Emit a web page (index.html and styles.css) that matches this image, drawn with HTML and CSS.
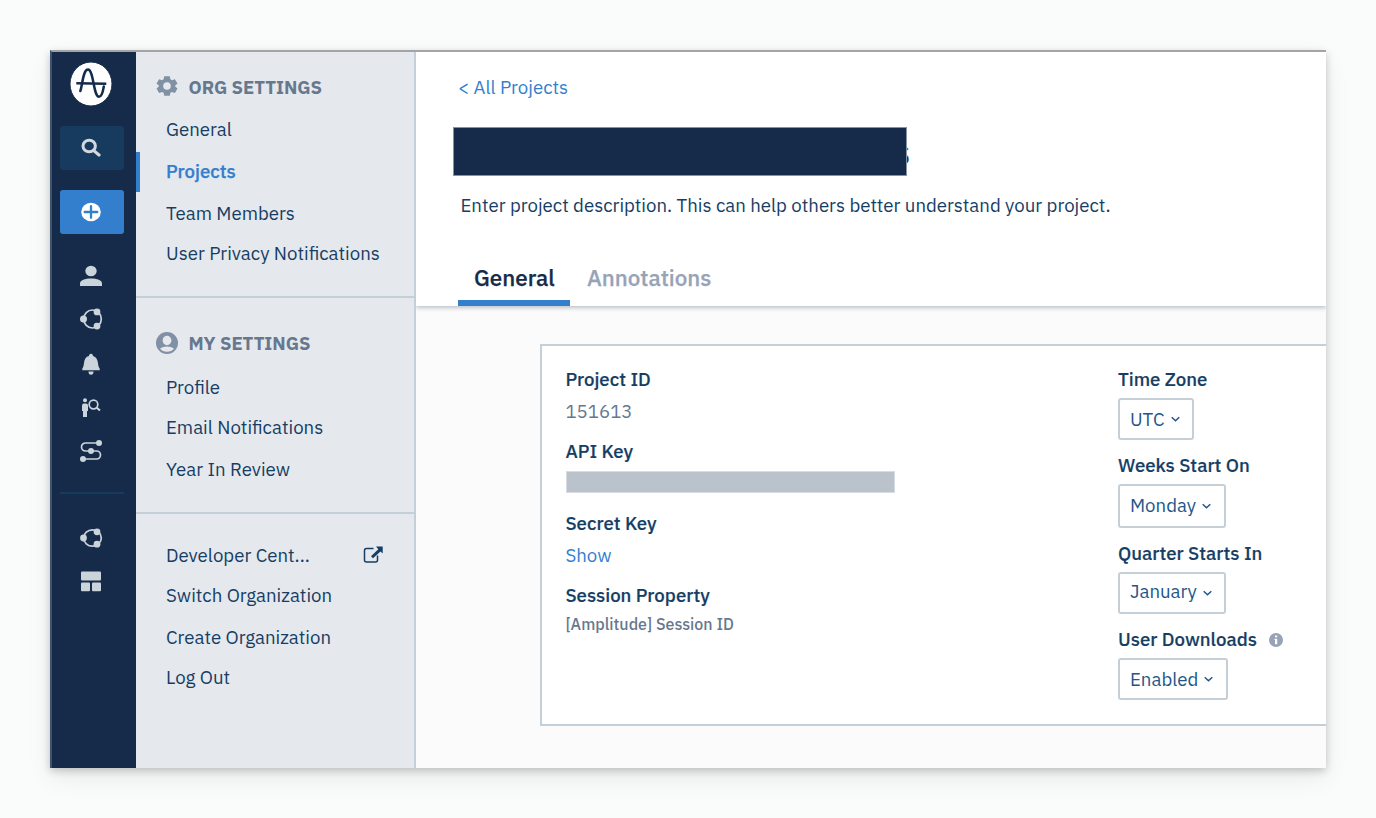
FILE: index.html
```html
<!DOCTYPE html>
<html lang="en">
<head>
<meta charset="utf-8">
<title>Project Settings</title>
<link rel="stylesheet" href="styles.css">
</head>
<body>
<div class="window">
  <nav class="rail">
    <svg class="logo" viewBox="0 0 42 44"><ellipse cx="21" cy="22" rx="21" ry="22" fill="#fff"/><path d="M6.300 21.300L36.300 21.700" stroke-width="2.600"/><path d="M10.300 29C12.300 24 13 7.600 18 7.600C23.800 7.600 23.300 34.800 29 34.800C31.500 34.800 33 29.500 33.800 24.500" stroke-width="2.500" stroke-linecap="round"/></svg>
    <div class="rail-button search"><svg width="20" height="20" viewBox="0 0 20 20"><ellipse cx="8.200" cy="8" rx="6.200" ry="5.800" fill="none" stroke="#d1d8df" stroke-width="3"/><path d="M12.800 12.600L18 17" stroke="#d1d8df" stroke-width="3.200" stroke-linecap="round"/></svg></div>
    <div class="rail-button add"><svg width="20" height="20" viewBox="0 0 20 20"><ellipse cx="10" cy="10" rx="9.800" ry="9.200" fill="#fff"/><path d="M10 4.200V15.800M3.700 10H16.300" stroke="#337fce" stroke-width="2.300" stroke-linecap="round"/></svg></div>
    <div class="rail-icons">
      <svg viewBox="0 0 24 24"><ellipse cx="12" cy="7" rx="5.700" ry="5.200"/><path d="M1 22v-2.500C1 16 6 14.500 12 14.500S23 16 23 19.500V22z"/></svg>
      <svg viewBox="0 1 24 24"><ellipse cx="13.500" cy="12" rx="8.800" ry="9" class="line"/><circle cx="4.500" cy="12" r="3.500"/><circle cx="18" cy="4.900" r="3.400"/><circle cx="18" cy="19.100" r="3.400"/></svg>
      <svg viewBox="0 -1 24 24"><path d="M12 .8c1.300 0 2 1 2 2.200c3.200.8 4.500 3.300 5 7.300c.4 3.500 1 4.200 1.700 5.200v1.800H3.300v-1.800C4 14.500 4.600 13.500 5 10c.5-4 1.800-6.200 5-7C10 1.800 10.700.8 12 .8zM9.500 18.500h5a2.500 3.200 0 0 1-5 0z"/></svg>
      <svg viewBox="0 0 24 24"><circle cx="6" cy="4.200" r="2"/><path d="M3 9.500Q3 7.500 5 7.500h2Q9 7.500 9 9.500V15H8v6H4V15H3z"/><circle cx="14.500" cy="8.500" r="4.300" class="line"/><path d="M17.500 11.500L21 14.500" class="line thick"/></svg>
      <svg viewBox="0 1 24 24"><path d="M19 4H6.500a4 4 0 0 0 0 8h11a4 4 0 0 1 0 8H4" class="line"/><circle cx="20" cy="4" r="3"/><circle cx="12" cy="12" r="3"/><circle cx="4" cy="20" r="3"/></svg>
    </div>
    <div class="rail-line"></div>
    <div class="rail-icons">
      <svg viewBox="0 0 24 24"><ellipse cx="13.500" cy="12" rx="8.800" ry="8.200" class="line"/><circle cx="4.500" cy="12" r="3.400"/><circle cx="18" cy="5.800" r="3.400"/><circle cx="18" cy="18.200" r="3.400"/></svg>
      <svg viewBox="0 1 24 24"><rect x="2" y="2.500" width="20" height="9" rx="1"/><rect x="2" y="13.500" width="9" height="8.800" rx="1"/><rect x="13" y="13.500" width="9" height="8.800" rx="1"/></svg>
    </div>
  </nav>
  <aside class="sidebar">
    <section class="group org">
      <h2><svg viewBox="0 0 22 22"><path fill-rule="evenodd" d="M8.200 1.300h5.600l.6 3l1.500.9l3-1l2.600 4.300l-2.300 2v1.100l2.300 2l-2.600 4.300l-3-1l-1.500.9l-.6 3H8.200l-.6-3l-1.500-.9l-3 1L.5 13.600l2.300-2v-1.100l-2.300-2l2.600-4.300l3 1l1.500-.9zM11 7.200a3.800 3.800 0 1 0 0 7.600a3.800 3.800 0 1 0 0-7.600z"/></svg><span>ORG SETTINGS</span></h2>
      <ul>
        <li>General</li>
        <li class="active">Projects</li>
        <li class="spaced">Team Members</li>
        <li>User Privacy Notifications</li>
      </ul>
    </section>
    <section class="group mine">
      <h2><svg viewBox="0 0 22 22"><circle cx="11" cy="11" r="11"/><ellipse cx="11" cy="8.500" rx="4.400" ry="4.700" fill="#e5e8ed"/><path d="M4 16.500q3-2 7-2t7 2q-2.500 3.300-7 3.300t-7-3.300z" fill="#e5e8ed"/></svg><span>MY SETTINGS</span></h2>
      <ul>
        <li>Profile</li>
        <li>Email Notifications</li>
        <li class="spaced">Year In Review</li>
      </ul>
    </section>
    <section class="group links">
      <ul>
        <li>Developer Cent...<svg class="external" width="20" height="18" viewBox="0 0 20 18"><path d="M10.500 2.500H3.500Q1.500 2.500 1.500 4.500V14Q1.500 16 3.500 16H12.500Q14.500 16 14.500 14V9.500" fill="none" stroke="#163e64" stroke-width="1.500"/><path d="M13 .5H19.700V7.500L17.500 5.400L10 12.200L8 10.300L15.300 3.200z" fill="#163e64"/></svg></li>
        <li>Switch Organization</li>
        <li class="spaced">Create Organization</li>
        <li>Log Out</li>
      </ul>
    </section>
  </aside>
  <main class="main">
    <header class="head">
      <a class="back">&lt; All Projects</a>
      <div class="title"><span class="mask"></span><span class="tail">s</span></div>
      <p class="desc">Enter project description. This can help others better understand your project.</p>
      <div class="tabs"><div class="tab selected">General</div><div class="tab">Annotations</div></div>
    </header>
    <div class="card">
      <dl class="keys">
        <dt>Project ID</dt><dd>151613</dd>
        <dt>API Key</dt><dd class="masked"><span class="key-mask"></span></dd>
        <dt>Secret Key</dt><dd class="link">Show</dd>
        <dt>Session Property</dt><dd class="small">[Amplitude] Session ID</dd>
      </dl>
      <div class="options">
        <label>Time Zone</label>
        <div class="select utc"><span>UTC</span><svg width="9" height="6" viewBox="0 0 9 6"><path d="M.7 1.200L4.500 4.700L8.300 1.200"/></svg></div>
        <label>Weeks Start On</label>
        <div class="select week"><span>Monday</span><svg width="9" height="6" viewBox="0 0 9 6"><path d="M.7 1.200L4.500 4.700L8.300 1.200"/></svg></div>
        <label>Quarter Starts In</label>
        <div class="select quarter"><span>January</span><svg width="9" height="6" viewBox="0 0 9 6"><path d="M.7 1.200L4.500 4.700L8.300 1.200"/></svg></div>
        <label>User Downloads<svg class="info" width="14" height="14" viewBox="0 0 14 14"><circle cx="7" cy="7" r="7" fill="#97a3b6"/><path d="M6 2.500h2.200v1.800H6zM5.500 5.800H8.200V11.300H6V7H5.500z" fill="#fff"/></svg></label>
        <div class="select downloads"><span>Enabled</span><svg width="9" height="6" viewBox="0 0 9 6"><path d="M.7 1.200L4.500 4.700L8.300 1.200"/></svg></div>
      </div>
    </div>
  </main>
</div>
</body>
</html>
```
FILE: styles.css
```css
* { box-sizing: border-box; }
body { margin: 0; padding: 50px; height: 818px; overflow: hidden; background: #fafcfb; font-family: "IBM Plex Sans", Roboto, "Liberation Sans", sans-serif; font-size: 18.65px; line-height: 20px; color: #163e64; white-space: nowrap; }
h2, p, ul, dl, dd { margin: 0; padding: 0; }
svg { display: block; flex: none; }
.window { display: flex; width: 1276px; height: 718px; border-top: 2px solid #a3a4a5; border-left: 2px solid #3d536e; background: #fbfbfb; box-shadow: 0 3px 8px rgba(0,0,0,.2), 0 10px 24px rgba(0,0,0,.07); }
.rail { width: 84px; background: #152b49; padding: 10px 12px 0 8px; }
.logo { width: 42px; height: 44px; margin: 0 0 20px 10px; fill: none; stroke: #152b49; }
.rail-button { display: flex; align-items: center; justify-content: center; height: 44px; padding-right: 2px; border-radius: 3px; margin-bottom: 20px; }
.search { background: #173b5e; }
.add { background: #337fce; margin-bottom: 30px; }
.rail-icons { display: flex; flex-direction: column; align-items: center; gap: 20px; padding-right: 2px; }
.rail-icons svg { width: 24px; height: 24px; fill: #cbd3db; }
.rail-icons .line { fill: none; stroke: #cbd3db; stroke-width: 1.7; }
.rail-icons .thick { stroke-width: 2.2; }
.rail-line { height: 2px; background: #173b5e; margin: 28px 0 32px; }
.sidebar { width: 280px; background: #e5e8ed; border-right: 2px solid #c5cfd8; }
.group { padding-left: 30px; border-bottom: 2px solid #c5cfd8; }
.group h2 { display: flex; align-items: center; gap: 10.5px; margin-left: -10px; height: 20px; font-size: 18.5px; font-weight: 700; letter-spacing: -0.04px; color: #66788e; }
.group h2 svg { width: 22px; height: 22px; fill: #8090a5; }
.group ul { list-style: none; display: flex; flex-direction: column; gap: 20px; }
.group li { display: flex; align-items: center; height: 20px; }
.group li.spaced { margin-top: 2px; }
.org { height: 246px; padding-top: 25px; }
.org h2 svg { margin-bottom: 2px; }
.org ul { margin-top: 22px; }
.org li.active { height: 40px; margin: -7px 0 -11px -30px; padding: 0 0 2px 26px; border-left: 4px solid #337fce; color: #337fce; font-weight: 500; -webkit-text-stroke: .25px; }
.mine { height: 216px; padding-top: 35px; }
.mine ul { margin-top: 24px; }
.links { border: 0; padding-top: 31px; }
.external { margin: 0 31px 1px auto; }
.main { width: 910px; }
.head { height: 254px; padding-top: 25px; background: #fff; box-shadow: 0 2px 4px rgba(50,65,90,.3); clip-path: inset(0 0 -10px 0); }
.back { display: block; margin-left: 42px; color: #337fce; }
.title { display: flex; width: 460px; height: 49px; margin: 30px 0 19px 37px; }
.mask { flex: none; width: 454px; height: 49px; background: #152b49; border: 1px solid #8793a3; z-index: 1; }
.tail { font-size: 36px; font-weight: 500; line-height: 49px; margin-left: -14.8px; -webkit-text-stroke: .4px; }
.desc { margin-left: 44.5px; }
.tabs { display: flex; gap: 17px; margin: 53px 0 0 42px; font-size: 22.4px; font-weight: 500; color: #97a3b6; }
.tab { height: 38px; -webkit-text-stroke: .25px; }
.tab.selected { width: 112px; padding-left: 16px; border-bottom: 6px solid #337fce; color: #152b49; }
.card { display: flex; margin: 38px 0 0 124px; height: 382px; border: 2px solid #c5cfd8; border-right: 0; background: #fff; padding: 23px 0 0 23.4px; }
.keys { width: 552.6px; }
.keys dt { height: 20px; font-weight: 500; -webkit-text-stroke: .15px; }
.keys dd { height: 20px; margin: 12px 0 20px; color: #66788e; }
.keys dd.link { color: #337fce; }
.keys dd.masked { display: flex; }
.keys dd.small { margin-top: 9px; font-size: 16px; font-weight: 500; }
.key-mask { width: 329px; height: 22px; margin: -2px 0 0 .6px; background: #bac2cc; border: 1px solid #d7dce2; }
.options label { display: flex; align-items: center; height: 20px; font-weight: 500; -webkit-text-stroke: .15px; }
.info { margin: 1px 0 0 12px; }
.select { display: flex; align-items: center; gap: 6px; border: 2px solid #c5cfd8; border-radius: 3px; padding-left: 10px; margin: 9px 0 15px; height: 42px; color: #235688; }
.select svg { fill: none; stroke: #235688; stroke-width: 1.5; }
.utc { width: 76px; }
.week { width: 108px; height: 44px; }
.week span { padding-bottom: 2px; }
.quarter { width: 108px; }
.quarter span { padding-bottom: 4px; }
.downloads { width: 110px; }
```
